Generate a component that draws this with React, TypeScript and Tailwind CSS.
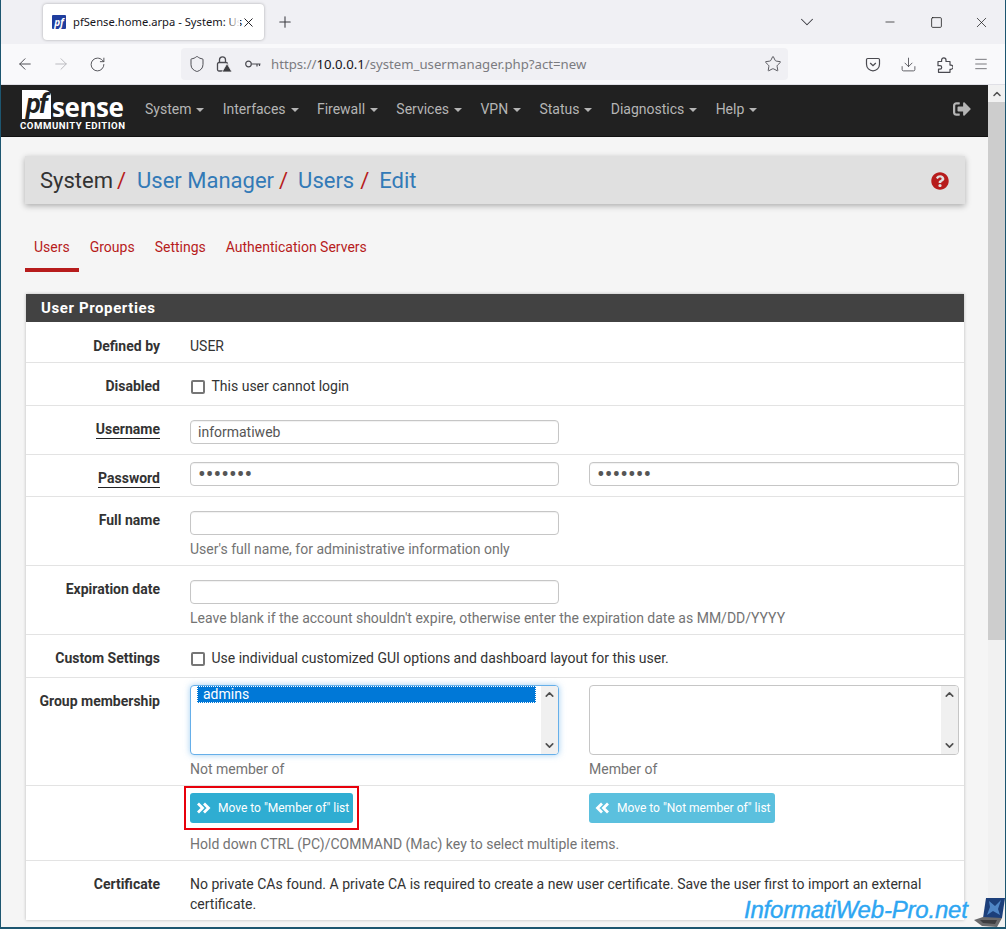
import React from "react";
import { ArrowLeft, ArrowRight, ChevronDown, ChevronUp, Download, Menu, Minus, Plus, RotateCw, Shield, Square, Star, X } from "lucide-react";
import { FaQuestionCircle, FaSignOutAlt } from "react-icons/fa";

const navItems = ["System", "Interfaces", "Firewall", "Services", "VPN", "Status", "Diagnostics", "Help"];

const inputClass =
  "block h-[24px] rounded-[4px] border border-[#c6c6c6] bg-white px-[7px] text-[#555] shadow-[inset_0_1px_1px_rgba(0,0,0,0.06)] outline-none";

// Browser tab strip + url bar
const BrowserChrome = () => (
  <div className="font-['Noto_Sans',sans-serif]">
    <div className="flex h-[44px] items-center bg-[#f0f0f4]">
      <div className="ml-[42px] flex h-[36px] w-[221px] items-center rounded-[4px] bg-white pl-[9px] shadow-[0_0_3px_rgba(0,0,0,0.3)]">
        <div className="flex h-[14px] w-[14px] items-center justify-center overflow-hidden rounded-[1px] bg-[#1f3d9e] text-[10px] font-bold italic leading-none text-white">
          pf
        </div>
        <div className="relative ml-[7px] w-[167px] whitespace-nowrap text-[11.2px] text-[#15141a]">
          pfSense.home.arpa - System: Us
          <div className="absolute inset-y-0 right-0 w-[14px] bg-gradient-to-r from-transparent to-white" />
        </div>
        <X size={15} strokeWidth={1.5} className="ml-[1px] text-[#15141a]" />
      </div>
      <Plus size={18} strokeWidth={1.4} className="ml-[12px] text-[#3a3a40]" />
      <ChevronDown size={22} strokeWidth={1.1} className="ml-[502px] text-[#3a3a40]" />
      <Minus size={14} strokeWidth={1.2} className="ml-[65px] text-[#111]" />
      <Square size={13} strokeWidth={1.4} className="ml-[33px] text-[#111]" />
      <X size={17} strokeWidth={1} className="ml-[30px] text-[#111]" />
    </div>
    <div className="flex h-[41px] items-center border-b border-[#e0e0e6] bg-[#f9f9fb]">
      <ArrowLeft size={18} strokeWidth={1.3} className="ml-[15px] text-[#4a4a50]" />
      <ArrowRight size={18} strokeWidth={1.3} className="ml-[18px] text-[#b9b9be]" />
      <RotateCw size={17} strokeWidth={1.3} className="ml-[19px] text-[#4a4a50]" />
      <div className="ml-[75px] flex h-[32px] w-[607px] items-center rounded-[4px] bg-[#f0f0f4] pl-[7px] text-[13.2px]">
        <Shield size={18} strokeWidth={1.3} className="text-[#4a4a50]" />
        <svg width="17" height="18" viewBox="0 0 17 18" className="ml-[10px]">
          <rect x="1.5" y="7.5" width="10" height="8.5" rx="1.5" fill="none" stroke="#4a4a50" strokeWidth="1.3" />
          <path d="M3.5 7V4.8a3 3 0 0 1 6 0V7" fill="none" stroke="#4a4a50" strokeWidth="1.3" />
          <path d="M11 8.5l5 8.5H6z" fill="#3c3c40" stroke="#f0f0f4" strokeWidth="0.8" />
        </svg>
        <svg width="16" height="10" viewBox="0 0 16 10" className="ml-[12px]">
          <circle cx="3.5" cy="5" r="2.8" fill="none" stroke="#4a4a50" strokeWidth="1.2" />
          <path d="M6.5 5H15.5M12 5v2.5M14.5 5v2" fill="none" stroke="#4a4a50" strokeWidth="1.2" />
        </svg>
        <div className="ml-[10px] w-[480px] whitespace-nowrap pt-[1px] text-[#7b7b80]">
          https://<span className="text-[#15141a]">10.0.0.1</span>/system_usermanager.php?act=new
        </div>
        <Star size={18} strokeWidth={1.2} className="ml-[13px] text-[#4a4a50]" />
      </div>
      <svg width="16" height="15" viewBox="0 0 15 15" className="ml-[77px]">
        <path d="M2.2 1.5h10.6a1.2 1.2 0 0 1 1.2 1.2v4.6a6.5 6.5 0 0 1-13 0V2.7a1.2 1.2 0 0 1 1.2-1.2z" fill="none" stroke="#4a4a50" strokeWidth="1.2" />
        <path d="M4.7 6l2.8 2.7L10.3 6" fill="none" stroke="#4a4a50" strokeWidth="1.3" />
      </svg>
      <Download size={17} strokeWidth={1.2} className="ml-[19px] text-[#4a4a50]" />
      {/* firefox extensions piece */}
      <svg width="17" height="17" viewBox="0 0 17 17" className="ml-[19px]">
        <path
          d="M2 5.5h3.6V4a2.2 2.2 0 0 1 4.4 0v1.5h4v3.6h1a2.1 2.1 0 0 1 0 4.2h-1v3H2.5v-3.2H4a1.7 1.7 0 0 0 0-3.4H2z"
          fill="none"
          stroke="#4a4a50"
          strokeWidth="1.2"
          strokeLinejoin="round"
        />
      </svg>
      <Menu size={16} strokeWidth={1.1} className="ml-[20px] text-[#4a4a50]" />
    </div>
  </div>
);

const Navbar = () => (
  <div className="flex h-[52px] items-center border-b border-[#111] bg-[#212121] font-['Roboto',sans-serif]">
    <div className="ml-[19px] flex w-[106px] shrink-0 flex-col">
      <div className="ml-[2px] flex h-[29px] items-end">
        <div className="flex h-[29px] w-[29px] items-center justify-center rounded-tr-[6px] bg-white pr-[1px] text-[27px] font-bold italic leading-none tracking-[-2px] text-[#212121]">
          pf
        </div>
        <div className="ml-[1px] font-['Open_Sans',sans-serif] text-[26px] font-bold leading-[24px] tracking-[-0.45px] text-white">sense</div>
      </div>
      <div className="mt-[1px] whitespace-nowrap text-[9.6px] font-bold leading-[12px] tracking-[0.55px] text-white">COMMUNITY EDITION</div>
    </div>
    <div className="mb-[2px] ml-[19px] flex gap-[18.3px] text-[14px] text-[#b5b5b5]">
      {navItems.map((item) => (
        <div key={item} className="flex items-center gap-[5px]">
          {item}
          <span className="h-0 w-0 border-x-[4px] border-t-[4px] border-x-transparent border-t-[#b5b5b5]" />
        </div>
      ))}
    </div>
    <FaSignOutAlt className="mb-[3px] ml-auto mr-[17px] text-[18px] text-[#b5b5b5]" />
  </div>
);

const Row = ({ label, underline, className, labelClass, children }: { label?: string; underline?: boolean; className: string; labelClass: string; children: React.ReactNode }) => (
  <div className={`flex border-b border-[#e3e3e3] pr-[5px] ${className}`}>
    <div className={`w-[134px] shrink-0 text-right text-[14px] font-bold leading-[20px] text-[#333] ${labelClass}`}>
      {underline ? <span className="border-b border-[#222] pb-[1px]">{label}</span> : label}
    </div>
    <div className="ml-[30px] min-w-0 flex-1">{children}</div>
  </div>
);

const Help = ({ children, className = "" }: { children: React.ReactNode; className?: string }) => (
  <div className={`text-[14px] leading-[20px] text-[#737373] ${className}`}>{children}</div>
);

const ListBox = ({ focused, children }: { focused?: boolean; children?: React.ReactNode }) => (
  <div
    className={`flex h-[70px] overflow-hidden rounded-[4px] border bg-white ${
      focused ? "border-[#66afe9] shadow-[0_0_6px_rgba(102,175,233,0.6)]" : "border-[#c6c6c6]"
    }`}
  >
    <div className="min-w-0 flex-1 pl-[6px] pr-[5px]">{children}</div>
    <div className="flex w-[17px] flex-col items-center justify-between bg-[#f0f0f0] py-[2px] text-[#505050]">
      <ChevronUp size={13} strokeWidth={3} />
      <ChevronDown size={13} strokeWidth={3} />
    </div>
  </div>
);

const Chevrons = ({ left }: { left?: boolean }) => (
  <svg width="15" height="12" viewBox="0 0 15 12" className={left ? "-scale-x-100" : ""}>
    <path d="M2 1.5L6.5 6 2 10.5M8 1.5L12.5 6 8 10.5" fill="none" stroke="#fff" strokeWidth="2.8" />
  </svg>
);

const Page = () => (
  <div className="h-[792px] overflow-hidden bg-[#f5f5f5] pl-[24px] pr-[23px] pt-[19px] font-['Roboto',sans-serif]">
    {/* Breadcrumb */}
    <div className="flex h-[48px] items-center bg-[#e0e0e0] pl-[15px] pr-[16px] pt-[2px] text-[22px] leading-none shadow-[0_2px_6px_rgba(0,0,0,0.3)]">
      <span className="text-[#333]">System</span>
      <span className="ml-[4px] text-[#b71c1c]">/</span>
      <span className="ml-[11px] text-[#337ab7]">User Manager</span>
      <span className="ml-[5px] text-[#b71c1c]">/</span>
      <span className="ml-[10px] text-[#337ab7]">Users</span>
      <span className="ml-[6px] text-[#b71c1c]">/</span>
      <span className="ml-[10px] text-[#337ab7]">Edit</span>
      <FaQuestionCircle className="ml-auto text-[18px] text-[#b71c1c]" />
    </div>

    {/* Tabs */}
    <div className="mt-[29px] flex h-[39px] gap-[2px] text-[14px] leading-[28px] text-[#b71c1c]">
      <div className="border-b-[4px] border-[#b71c1c] px-[9px]">Users</div>
      <div className="px-[9px]">Groups</div>
      <div className="px-[9px]">Settings</div>
      <div className="px-[9px]">Authentication Servers</div>
    </div>

    {/* User Properties panel */}
    <div className="ml-[1px] mt-[22px] w-[938px] bg-white shadow-[0_0_3px_rgba(0,0,0,0.25)]">
      <div className="flex h-[28px] items-center bg-[#424242] pl-[15px] text-[15px] font-bold tracking-[0.6px] text-white">User Properties</div>

      <Row label="Defined by" className="h-[41px]" labelClass="pt-[14px]">
        <div className="pt-[14px] text-[14px] leading-[20px] text-[#333]">USER</div>
      </Row>
      <Row label="Disabled" className="h-[43px]" labelClass="pt-[13px]">
        <label className="flex items-center pt-[13px] text-[14px] leading-[20px] text-[#333]">
          <input type="checkbox" readOnly className="ml-[1px] mt-[2px] h-[14px] w-[14px] appearance-none rounded-[2px] border-2 border-[#767676] bg-white" />
          <span className="ml-[6.5px]">This user cannot login</span>
        </label>
      </Row>
      <Row label="Username" underline className="h-[49px]" labelClass="pt-[13px]">
        <div className="pt-[14px]">
          <input readOnly value="informatiweb" className={`${inputClass} w-[369px] text-[14px]`} />
        </div>
      </Row>
      <Row label="Password" underline className="h-[42px]" labelClass="pt-[13px]">
        <div className="flex gap-[30px] pt-[7px]">
          <input readOnly type="password" value="1234567" className={`${inputClass} w-[369px] shrink-0 pt-[3px] text-[23px]`} />
          <input readOnly type="password" value="1234567" className={`${inputClass} w-[370px] shrink-0 pt-[3px] text-[23px]`} />
        </div>
      </Row>
      <Row label="Full name" className="h-[69px]" labelClass="pt-[13px]">
        <div className="pt-[14px]">
          <input readOnly className={`${inputClass} w-[369px] text-[14px]`} />
        </div>
        <Help className="mt-[4px]">User's full name, for administrative information only</Help>
      </Row>
      <Row label="Expiration date" className="h-[69px]" labelClass="pt-[13px]">
        <div className="pt-[14px]">
          <input readOnly className={`${inputClass} w-[369px] text-[14px]`} />
        </div>
        <Help className="mt-[4px]">Leave blank if the account shouldn't expire, otherwise enter the expiration date as MM/DD/YYYY</Help>
      </Row>
      <Row label="Custom Settings" className="h-[43px]" labelClass="pt-[13px]">
        <label className="flex items-center pt-[13px] text-[14px] leading-[20px] text-[#333]">
          <input type="checkbox" readOnly className="ml-[1px] mt-[2px] h-[14px] w-[14px] appearance-none rounded-[2px] border-2 border-[#767676] bg-white" />
          <span className="ml-[6.5px]">Use individual customized GUI options and dashboard layout for this user.</span>
        </label>
      </Row>
      <Row label="Group membership" className="h-[108px]" labelClass="pt-[13px]">
        <div className="flex gap-[30px] pt-[7px]">
          <div className="w-[369px]">
            <ListBox focused>
              <div className="h-[17px] border border-dotted border-white bg-[#0078d7] pl-[5px] text-[14px] leading-[14px] text-white">admins</div>
            </ListBox>
            <Help className="mt-[4px]">Not member of</Help>
          </div>
          <div className="w-[370px]">
            <ListBox />
            <Help className="mt-[4px]">Member of</Help>
          </div>
        </div>
      </Row>
      <Row className="h-[75px]" labelClass="">
        <div className="flex gap-[30px] pt-[7px]">
          <div className="w-[369px]">
            <div className="relative w-[163px]">
              <div className="flex h-[30px] items-center gap-[7px] rounded-[3px] bg-[#2fadd2] pl-[6px] text-[12px] text-white">
                <Chevrons />
                Move to "Member of" list
              </div>
              {/* red annotation around the button */}
              <div className="absolute -inset-x-[6px] -bottom-[7px] -top-[7px] border-2 border-[#e8000b]" />
            </div>
          </div>
          <div className="flex h-[30px] w-[186px] items-center gap-[7px] rounded-[3px] bg-[#5bc0de] pl-[6px] text-[12px] text-white">
            <Chevrons left />
            Move to "Not member of" list
          </div>
        </div>
        <Help className="mt-[11px]">Hold down CTRL (PC)/COMMAND (Mac) key to select multiple items.</Help>
      </Row>
      <div className="flex h-[59px] pr-[30px]">
        <div className="w-[134px] shrink-0 pt-[13px] text-right text-[14px] font-bold leading-[20px] text-[#333]">Certificate</div>
        <div className="ml-[30px] pt-[13px] text-[14px] leading-[20px] text-[#333]">
          No private CAs found. A private CA is required to create a new user certificate. Save the user first to import an external certificate.
        </div>
      </div>
    </div>
  </div>
);

const Scrollbar = () => (
  <div className="flex w-[17px] shrink-0 flex-col items-center bg-[#f1f1f1]">
    <ChevronUp size={12} strokeWidth={3} className="my-[2.5px] text-[#505050]" />
    <div className="h-[538px] w-full bg-[#cdcdcd]" />
  </div>
);

export default function App() {
  return (
    <div className="relative h-[929px] w-[1006px] overflow-hidden border-x border-b-2 border-[#1d5670] bg-[#f5f5f5]">
      <BrowserChrome />
      <div className="flex">
        <div className="min-w-0 flex-1">
          <Navbar />
          <Page />
        </div>
        <Scrollbar />
      </div>

      {/* site watermark */}
      <div className="absolute left-[743px] top-[895px] font-['Liberation_Sans',sans-serif] text-[24px] italic leading-[30px] tracking-[-0.2px] text-[#2ea6f2] [-webkit-text-stroke:0.4px_#2ea6f2] [text-shadow:0_0_3px_#fff,0_0_3px_#fff]">
        InformatiWeb-Pro.net
      </div>
      <svg width="32" height="31" viewBox="0 0 32 31" className="absolute left-[973px] top-[897px]">
        <path d="M12 1h19l-3 20H9z" fill="#1c3f7a" />
        <path d="M15 4l6 5 6-6-3 9 2 6-7-4-6 4 3-8z" fill="#4f86c6" />
        <path d="M0 23l9-3 19 1-5 9-15-1z" fill="#6a6a6c" />
        <path d="M6 23l17 0-2 4-12-1z" fill="#3d3d40" />
      </svg>
    </div>
  );
}
